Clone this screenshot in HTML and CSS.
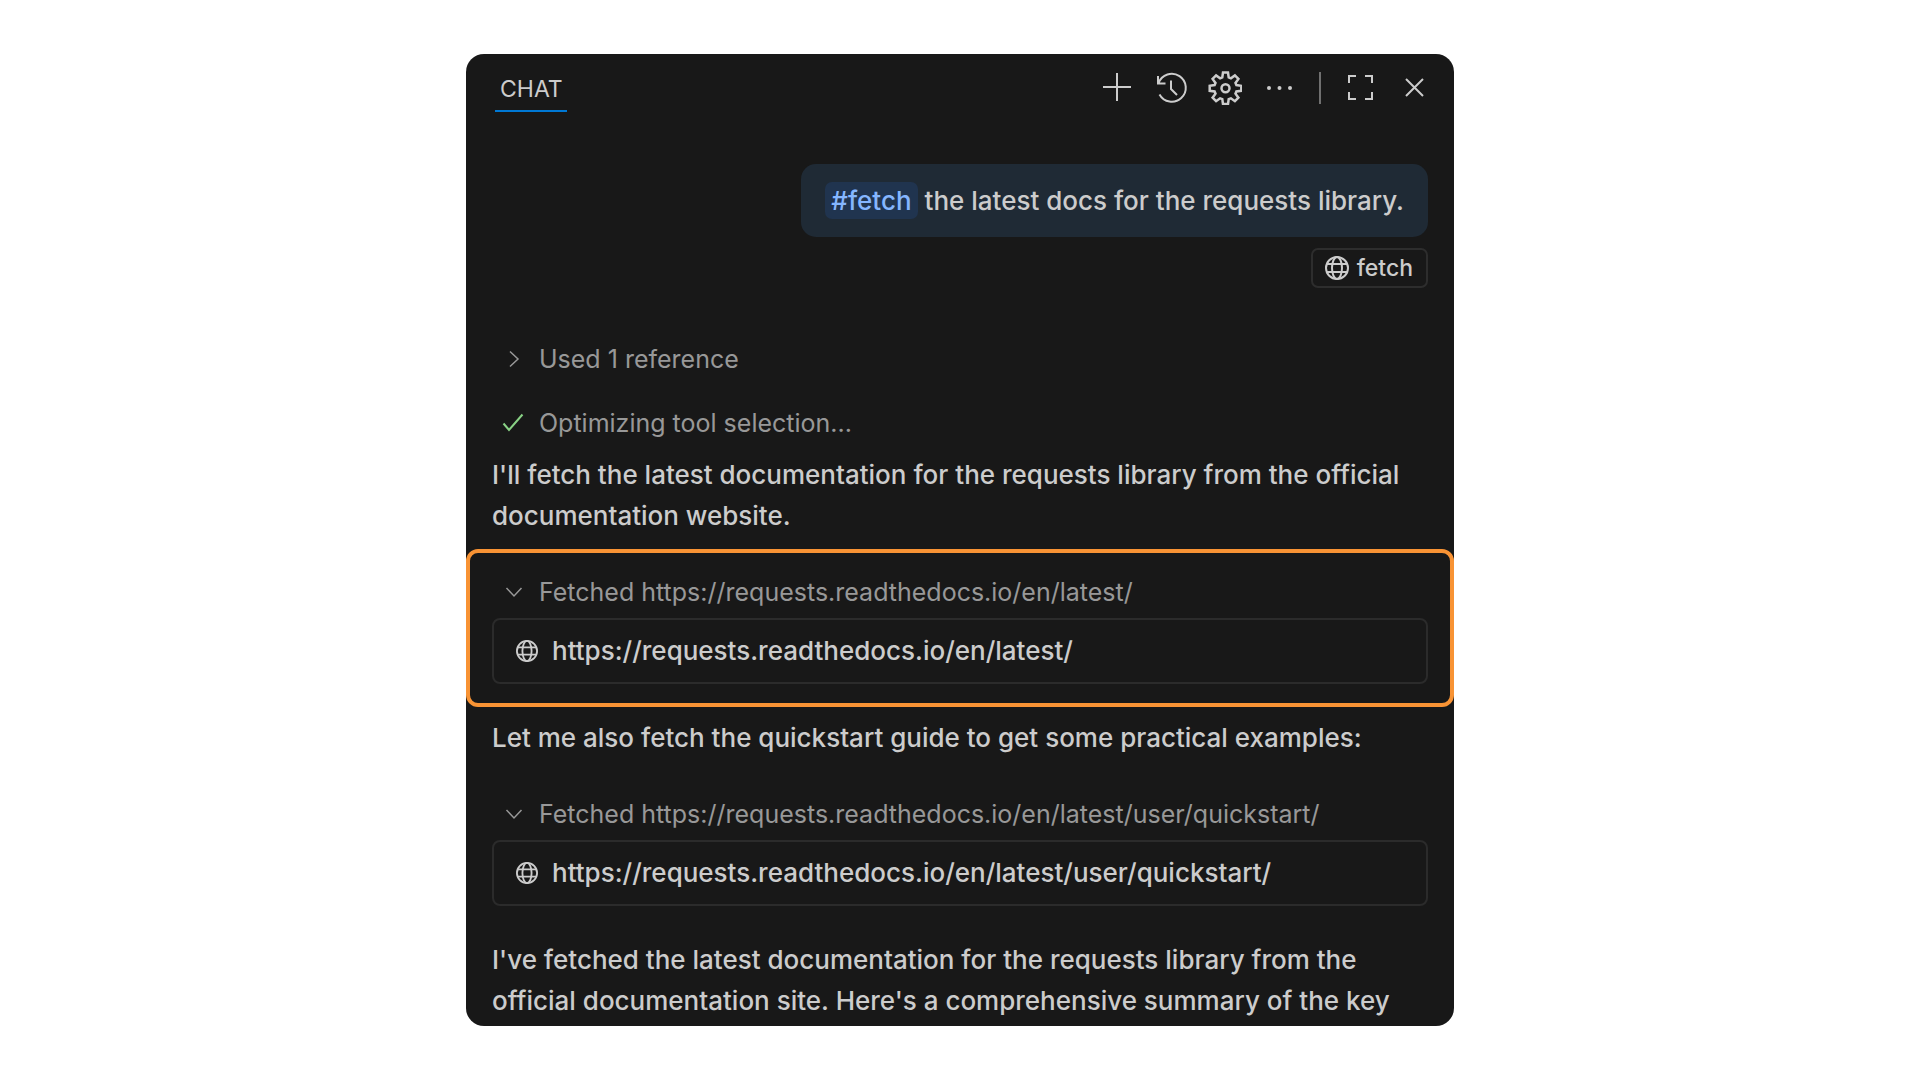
FILE: index.html
```html
<!DOCTYPE html>
<html lang="en">
<head>
  <meta charset="UTF-8" />
  <meta name="viewport" content="width=device-width, initial-scale=1.0" />
  <title>Chat</title>
  <link rel="stylesheet" href="styles.css">
</head>
<body>
  <svg class="sprite" aria-hidden="true">
    <symbol id="globe" viewBox="0 0 24 24">
      <circle cx="12" cy="12" r="11" />
      <ellipse cx="12" cy="12" rx="5" ry="11" />
      <path d="M1.8 8h20.4M1.8 16h20.4" />
    </symbol>
    <symbol id="chevron" viewBox="0 0 24 24">
      <path d="M4.5 8l7.5 8 7.5-8" />
    </symbol>
  </svg>

  <main class="panel">
    <header class="header">
      <h1 class="tab">CHAT</h1>
      <div class="actions">
        <button type="button" aria-label="New chat">
          <svg viewBox="0 0 34 34"><path d="M17 2v28M3 16h28" /></svg>
        </button>
        <button type="button" aria-label="History">
          <svg viewBox="0 0 34 34"><path d="M4 5v7.5h7.5M4.6 12A14 14 0 1 1 5.5 23.500M17 9.500v8.500l6 6" /></svg>
        </button>
        <button type="button" aria-label="Settings">
          <svg class="gear" viewBox="0 0 34 34">
            <path d="M14.300 6.400L15 1.500h5l.7 4.900 2.200.9 4-2.900 3.500 3.500-2.900 4 .9 2.200 4.900.7v5l-4.900.7-.9 2.200 2.900 4-3.500 3.500-4-2.900-2.200.9-.7 4.900h-5l-.7-4.900-2.200-.9-4 2.900-3.500-3.500 2.900-4-.9-2.200-4.900-.7v-5l4.900-.7.9-2.200-2.900-4 3.500-3.500 4 2.900z" />
            <circle cx="17.500" cy="17.300" r="4" />
          </svg>
        </button>
        <button type="button" aria-label="More actions">
          <svg class="dots" viewBox="0 0 34 34"><circle cx="7" cy="17" r="2" /><circle cx="17.500" cy="17" r="2" /><circle cx="28" cy="17" r="2" /></svg>
        </button>
        <span class="separator"></span>
        <button type="button" aria-label="Maximize">
          <svg viewBox="0 0 34 34"><path d="M13 5H6v7M22 5h7v7M6 21v7h7M29 21v7h-7" /></svg>
        </button>
        <button type="button" aria-label="Close">
          <svg viewBox="0 0 34 34"><path d="M9 8l17 17M26 8l-17 17" /></svg>
        </button>
      </div>
    </header>

    <section class="request">
      <p class="bubble"><span class="mention">#fetch</span> the latest docs for the requests library.</p>
      <span class="tag"><svg><use href="#globe" /></svg>fetch</span>
    </section>

    <section class="response">
      <button type="button" class="step used">
        <svg class="right"><use href="#chevron" /></svg>Used 1 reference
      </button>
      <p class="step optimizing">
        <svg class="check" viewBox="0 0 24 24"><path d="M1.500 12.500l5.500 6.500L20.500 3.500" /></svg>Optimizing tool selection...
      </p>
      <p class="intro">I'll fetch the latest documentation for the requests library from the official documentation website.</p>

      <div class="fetched highlight">
        <button type="button" class="step"><svg><use href="#chevron" /></svg>Fetched https://requests.readthedocs.io/en/latest/</button>
        <a class="link" href="#"><svg><use href="#globe" /></svg>https://requests.readthedocs.io/en/latest/</a>
      </div>

      <p class="followup">Let me also fetch the quickstart guide to get some practical examples:</p>

      <div class="fetched">
        <button type="button" class="step"><svg><use href="#chevron" /></svg>Fetched https://requests.readthedocs.io/en/latest/user/quickstart/</button>
        <a class="link" href="#"><svg><use href="#globe" /></svg>https://requests.readthedocs.io/en/latest/user/quickstart/</a>
      </div>

      <p class="summary">I've fetched the latest documentation for the requests library from the official documentation site. Here's a comprehensive summary of the key</p>
    </section>
  </main>
</body>
</html>
```
FILE: styles.css
```css
* {
  box-sizing: border-box;
}
body {
  margin: 0;
  padding: 54px 20px;
  background: #fff;
  color: #ccc;
  font-family: Inter, "Liberation Sans", sans-serif;
  font-size: 26px;
  font-weight: 500;
  line-height: 41px;
}
h1, p {
  margin: 0;
}
button {
  padding: 0;
  border: none;
  background: none;
  color: inherit;
  font: inherit;
  cursor: pointer;
}
svg {
  flex: none;
  width: 24px;
  height: 24px;
  fill: none;
  stroke: currentColor;
  stroke-width: 2;
}
.sprite {
  display: none;
}
.panel {
  max-width: 988px;
  margin: 0 auto;
  padding-bottom: 5px;
  background: #181818;
  border-radius: 18px;
}

/* header */
.header {
  display: flex;
  justify-content: space-between;
  align-items: flex-start;
  padding: 16px 23px 0 29px;
}
.tab {
  padding: 1px 4px 3px 5px;
  border-bottom: 2px solid #0078d4;
  font-size: 23px;
  font-weight: 400;
  line-height: 36px;
}
.actions {
  display: flex;
  align-items: center;
  gap: 20px;
  padding-top: 1px;
}
.actions button,
.actions svg {
  display: block;
  width: 34px;
  height: 34px;
}
.actions .gear {
  stroke-width: 2.5;
}
.actions .dots {
  fill: currentColor;
  stroke: none;
}
.separator {
  width: 2px;
  height: 32px;
  margin: 0 2px 0 3px;
  background: #707070;
}

/* user request */
.request {
  display: flex;
  flex-direction: column;
  align-items: flex-end;
  gap: 11px;
  padding: 52px 26px 0;
}
.bubble {
  padding: 16px 24px;
  background: #1f2a35;
  border-radius: 15px;
}
.mention {
  padding: 3px 6px;
  background: #20344f;
  border-radius: 7px;
  color: #85b6ff;
}
.tag {
  display: flex;
  align-items: center;
  gap: 8px;
  padding: 0 13px 0 12px;
  border: 2px solid #2d2d2d;
  border-radius: 7px;
  font-size: 23px;
  line-height: 36px;
}

/* response */
.response > p,
.fetched {
  padding: 0 26px;
}
.step {
  display: flex;
  align-items: center;
  gap: 13px;
  color: #989898;
  font-size: 25px;
  font-weight: 400;
  line-height: 40px;
  text-align: left;
}
.step svg {
  margin-left: 10px;
  stroke-width: 1.5;
}
.step .right {
  transform: rotate(-90deg);
}
.step .check {
  color: #89d185;
  stroke-width: 2;
}
.used {
  margin: 51px 26px 24px;
}
.intro {
  margin: 11px 0 13px;
}
.link {
  display: flex;
  align-items: center;
  gap: 14px;
  margin-top: 6px;
  padding: 11px 22px;
  border: 2px solid #2b2b2b;
  border-radius: 8px;
  color: inherit;
  line-height: 40px;
  text-decoration: none;
}
.link svg {
  width: 22px;
  height: 22px;
}
.highlight {
  padding: 19px 22px;
  border: 4px solid #f89334;
  border-radius: 12px;
}
.followup {
  margin: 10px 0 36px;
}
.summary {
  margin-top: 33px;
}
```
